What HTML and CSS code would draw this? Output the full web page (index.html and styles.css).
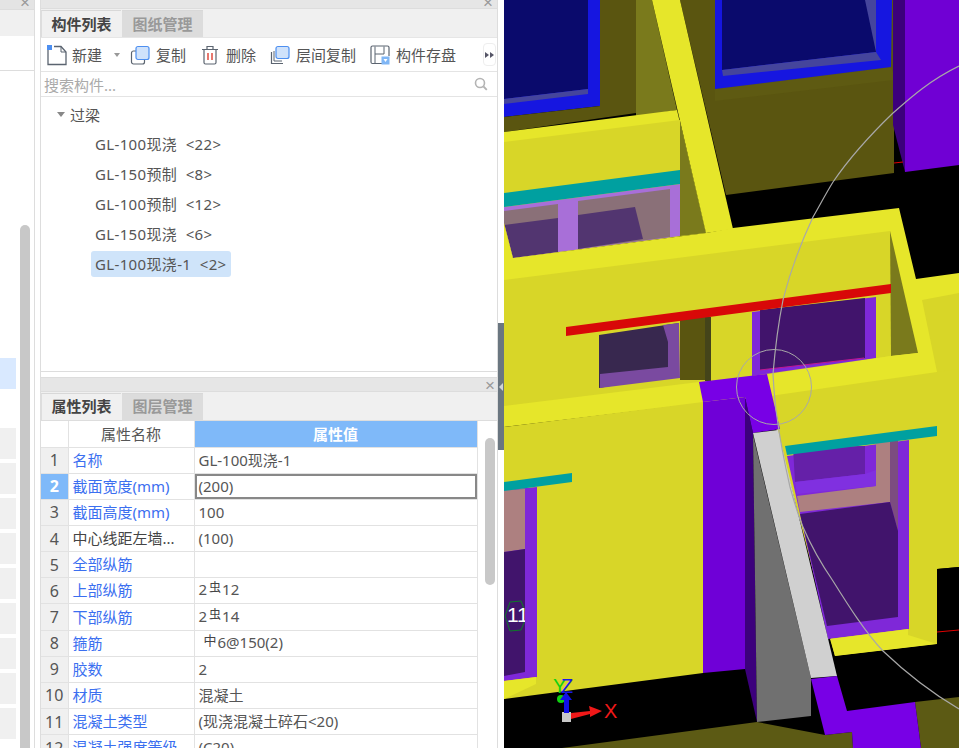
FILE: index.html
```html
<!DOCTYPE html>
<html lang="zh-CN">
<head>
<meta charset="utf-8">
<title>构件列表</title>
<link rel="stylesheet" href="styles.css">
</head>
<body>
<div class="app">
  <aside class="side">
    <div class="side-head"><span class="close">×</span></div>
    <div class="side-tabs"></div>
    <div class="side-tool"></div>
    <div class="side-body">
      <div class="side-list">
        <div class="blk blk-on"></div>
        <div class="blk blk-first"></div><div class="blk"></div><div class="blk"></div><div class="blk"></div>
        <div class="blk"></div><div class="blk"></div><div class="blk"></div><div class="blk"></div><div class="blk"></div>
      </div>
      <div class="side-scroll"></div>
    </div>
  </aside>

  <main class="panels">
    <section class="panel-top">
      <div class="head head-top"><span class="close">×</span></div>
      <div class="tabs">
        <div class="tab tab-on">构件列表</div>
        <div class="tab">图纸管理</div>
      </div>
      <div class="toolbar">
        <div class="tool tool-new">
          <svg class="ico" width="22" height="22" viewBox="0 0 22 22"><path d="M2 6V20.500H20V8L15 2.500H8" fill="none" stroke="#5b6470" stroke-width="1.300"/><path d="M15 2.500V8H20" fill="none" stroke="#5b6470" stroke-width="1"/><rect x="1" y="1" width="5" height="5" fill="#4d8ff0"/></svg>
          <span>新建</span><i class="caret"></i>
        </div>
        <div class="tool tool-copy">
          <svg class="ico" width="20" height="20" viewBox="0 0 20 20"><rect x="1.500" y="6" width="13" height="13" rx="2" fill="#fff" stroke="#5b6470" stroke-width="1.200"/><rect x="6" y="1.500" width="13" height="13" rx="2" fill="#cfe2fb" stroke="#4d8ff0" stroke-width="1.200"/></svg>
          <span>复制</span>
        </div>
        <div class="tool tool-del">
          <svg class="ico" width="18" height="20" viewBox="0 0 18 20"><path d="M3 5V17.500Q3 19 4.500 19H13.500Q15 19 15 17.500V5M1 4.500H17M6 4.500V1.500H12V4.500" fill="none" stroke="#5b6470" stroke-width="1.200"/><path d="M7 8V15M11 8V15" stroke="#e2574c" stroke-width="1.600"/></svg>
          <span>删除</span>
        </div>
        <div class="tool tool-floor">
          <svg class="ico" width="20" height="20" viewBox="0 0 20 20"><path d="M1.500 7V18.500H13" fill="none" stroke="#5b6470" stroke-width="1.200"/><path d="M4 6V16H12" fill="none" stroke="#5b6470" stroke-width="1"/><rect x="6" y="1.500" width="13" height="12" rx="2" fill="#cfe2fb" stroke="#4d8ff0" stroke-width="1.200"/></svg>
          <span>层间复制</span>
        </div>
        <div class="tool tool-save">
          <svg class="ico" width="20" height="20" viewBox="0 0 20 20"><path d="M12 18.500H2.500Q1 18.500 1 17V2.500Q1 1 2.500 1H17.500Q19 1 19 2.500V11" fill="none" stroke="#5b6470" stroke-width="1.200"/><path d="M5 1.500V18M5 9H14V1.500" fill="none" stroke="#5b6470" stroke-width="1"/><rect x="11.500" y="11.500" width="8" height="8" fill="#7fb6f5"/><path d="M13.500 14H17.500L15.500 17Z" fill="#fff"/></svg>
          <span>构件存盘</span>
        </div>
        <button class="more" type="button" aria-label="更多"><i></i><i></i></button>
      </div>
      <div class="search">
        <span>搜索构件...</span>
        <svg width="14" height="14" viewBox="0 0 14 14"><circle cx="6" cy="6" r="4.500" fill="none" stroke="#b4b4b4" stroke-width="1.600"/><path d="M9.500 9.500L12.800 12.800" stroke="#b4b4b4" stroke-width="1.800"/></svg>
      </div>
      <div class="tree">
        <div class="tree-root"><i class="tree-arrow"></i>过梁</div>
        <div class="tree-item"><span>GL-100现浇  &lt;22&gt;</span></div>
        <div class="tree-item"><span>GL-150预制  &lt;8&gt;</span></div>
        <div class="tree-item"><span>GL-100预制  &lt;12&gt;</span></div>
        <div class="tree-item"><span>GL-150现浇  &lt;6&gt;</span></div>
        <div class="tree-item tree-sel"><span>GL-100现浇-1  &lt;2&gt;</span></div>
      </div>
    </section>

    <section class="panel-bot">
      <div class="head head-bot"><span class="close close-bot">×</span></div>
      <div class="tabs tabs-bot">
        <div class="tab tab-on">属性列表</div>
        <div class="tab">图层管理</div>
      </div>
      <div class="grid-wrap">
        <table class="grid">
          <colgroup><col class="c-n"><col class="c-k"><col class="c-v"></colgroup>
          <thead><tr><th class="idx"></th><th class="th-name">属性名称</th><th class="th-val">属性值</th></tr></thead>
          <tbody>
            <tr><td class="idx">1</td><td class="key">名称</td><td>GL-100现浇-1</td></tr>
            <tr><td class="idx idx-on">2</td><td class="key">截面宽度(mm)</td><td class="cell-on">(200)</td></tr>
            <tr><td class="idx">3</td><td class="key">截面高度(mm)</td><td>100</td></tr>
            <tr><td class="idx">4</td><td class="dark">中心线距左墙...</td><td>(100)</td></tr>
            <tr><td class="idx">5</td><td class="key">全部纵筋</td><td></td></tr>
            <tr><td class="idx">6</td><td class="key">上部纵筋</td><td>2<span class="bar">虫</span>12</td></tr>
            <tr><td class="idx">7</td><td class="key">下部纵筋</td><td>2<span class="bar">虫</span>14</td></tr>
            <tr><td class="idx">8</td><td class="key">箍筋</td><td><span class="bar bar-first">中</span>6@150(2)</td></tr>
            <tr><td class="idx">9</td><td class="key">胶数</td><td>2</td></tr>
            <tr><td class="idx">10</td><td class="key">材质</td><td>混凝土</td></tr>
            <tr><td class="idx">11</td><td class="key">混凝土类型</td><td>(现浇混凝土碎石&lt;20)</td></tr>
            <tr><td class="idx">12</td><td class="key">混凝土强度等级</td><td>(C20)</td></tr>
          </tbody>
        </table>
        <div class="grid-scroll"><div class="thumb"></div></div>
      </div>
    </section>
  </main>

  <div class="splitter"><div class="split-handle"><i></i></div></div>

  <div class="scene">
    <svg class="scene-svg" width="455" height="748" viewBox="504 0 455 748" xmlns="http://www.w3.org/2000/svg">
      <rect x="504" y="0" width="455" height="748" fill="#000"/>
      <!-- far walls -->
      <polygon points="680,0 894,0 894,173 726,195" fill="#5a5510"/>
      <polygon points="715,89 891,67 894,76 894,80 715,101" fill="#5e5a12"/>
      <polygon points="715,0 892,0 891,67 715,89" fill="#1616e0"/>
      <polygon points="722,0 876,0 876,52 722,70" fill="#0a0a6c"/>
      <polygon points="722,70 876,52 881,60 723,76" fill="#45459c"/>
      <polygon points="865,0 876,0 876,52" fill="#45459c"/>
      <polygon points="893,0 905,0 905,172 893,125" fill="#3c007c"/>
      <polygon points="905,0 959,0 959,165 905,172" fill="#7000d4"/>
      <polygon points="504,0 600,0 600,106 504,117" fill="#1616e0"/>
      <polygon points="504,0 588,0 588,89 504,99" fill="#0a0a6c"/>
      <polygon points="504,99 588,89 588,94 504,104" fill="#45459c"/>
      <polygon points="600,0 636,0 636,113 504,132 504,117 600,106" fill="#5a5510"/>
      <polygon points="636,0 652,0 677,110 636,117" fill="#7a7a1c"/>
      <!-- upper-left wall -->
      <polygon points="504,132 677,110 706,233 513,258 504,223" fill="#e6e62a"/>
      <polygon points="504,142 680,120 680,236 513,258 504,223" fill="#d8d628"/>
      <polygon points="504,207 680,184 680,236 513,258 504,223" fill="#a86fd8"/>
      <polygon points="504,218 558,218 558,252 513,258 504,223" fill="#523570"/>
      <polygon points="504,211 558,204 558,218 504,225" fill="#8a7078"/>
      <polygon points="578,201 670,189 670,237 578,249" fill="#8a7078"/>
      <polygon points="578,215 635,207 643,239 578,249" fill="#523570"/>
      <polygon points="504,193 680,170 680,184 504,207" fill="#00a0a0"/>
      <polygon points="680,122 706,233 680,236" fill="#7a7a1c"/>
      <polygon points="652,0 680,0 733,229 706,233" fill="#e6e62a"/>
      <!-- middle wall -->
      <polygon points="504,223 513,258 706,233 733,228 899,208 916,279 959,273 959,380 504,420" fill="#e6e62a"/>
      <polygon points="504,280 890,231 891,356 770,374 504,410" fill="#d8d628"/>
      <polygon points="922,300 959,293 959,400 900,400 937,372" fill="#d8d628"/>
      <polygon points="890,231 918,353 891,356" fill="#7a7a1c"/>
      <polygon points="599,335 679,323 679,374 599,388" fill="#38284f"/>
      <polygon points="663,325 679,323 680,378 600,388 600,374 668,367 668,342" fill="#7a4aa0"/>
      <polygon points="680,317 705,317 705,380 680,380" fill="#5a5510"/>
      <rect x="705" y="317" width="6" height="64" fill="#44441a"/>
      <polygon points="752,312 876,297 876,358 752,376" fill="#7f28d8"/>
      <polygon points="760,310 865,298 865,358 760,370" fill="#41146c"/>
      <line x1="760" y1="370" x2="864" y2="358" stroke="#c01890" stroke-width="1"/>
      <polygon points="566,327 891,284 891,293 566,336" fill="#d80808"/>
      <polygon points="891,356 918,353 937,372 770,396 767,376" fill="#e6e62a"/>
      <line x1="894" y1="163" x2="903" y2="162" stroke="#e00000" stroke-width="1"/>
      <!-- lower wall -->
      <polygon points="504,406 699,382 703,403 504,427" fill="#e6e62a"/>
      <polygon points="504,427 703,402 703,673 504,699" fill="#d8d628"/>
      <polygon points="770,396 937,372 959,369 959,567 937,569 937,644 835,656 777,432" fill="#d8d628"/>
      <polygon points="937,569 959,567 959,700 830,700 835,656 937,644" fill="#000"/>
      <line x1="937" y1="632" x2="959" y2="630" stroke="#e00000" stroke-width="1"/>
      <!-- lower-left window -->
      <polygon points="504,490 537,487 537,677 504,681" fill="#7f28d8"/>
      <polygon points="504,490 525,489 525,549 504,552" fill="#ad8080"/>
      <polygon points="504,552 525,549 525,672 504,676" fill="#41146c"/>
      <polygon points="505,616 510,602 521,601 527,616 521,630 510,631" fill="none" stroke="#0d7a28" stroke-width="1"/>
      <text class="lbl-11" x="507" y="622" clip-path="url(#clip11)">11</text>
      <rect x="525" y="489" width="12" height="188" fill="#7f28d8"/>
      <polygon points="504,681 536,677 536,684 504,699" fill="#e6e62a"/>
      <polygon points="504,482 572,473 572,482 504,491" fill="#00a0a0"/>
      <!-- lower-right window -->
      <polygon points="787,456 909,440 909,629 828,639" fill="#7f28d8"/>
      <polygon points="793,447 865,446 865,474 795,482" fill="#6520a8"/>
      <polygon points="797,496 876,486 876,442 890,441 890,502 800,512" fill="#ad8080"/>
      <polygon points="890,441 898,440 898,531 890,502" fill="#7c4c80"/>
      <polygon points="795,482 865,474 876,470 876,486 797,494" fill="#8030e0"/>
      <polygon points="800,514 890,502 898,531 898,617 827,626" fill="#41146c"/>
      <polygon points="830,639 908,629 908,635 937,644 835,656" fill="#e6e62a"/>
      <polygon points="785,446 937,426 937,436 787,455" fill="#00a0a0"/>
      <!-- column and beam -->
      <polygon points="703,402 745,397 745,669 703,673" fill="#6f00d7"/>
      <polygon points="745,397 753,433 757,722 745,669" fill="#3c007c"/>
      <polygon points="699,382 767,374 780,429 753,433 745,397 703,402" fill="#7800e6"/>
      <polygon points="753,435 811,678 811,716 757,722" fill="#707070"/>
      <polygon points="753,433 778,430 837,676 811,678" fill="#d0d0d0"/>
      <!-- floor slab -->
      <polygon points="562,748 757,722 825,735 852,732 853,748" fill="#5c5a14"/>
      <polygon points="915,702 959,697 959,748 921,748" fill="#5c5a14"/>
      <polygon points="811,679 837,676 847,711 915,702 921,748 853,748 852,732 825,735" fill="#7800e6"/>
      <!-- sweep circles -->
      <path d="M959 66C930 80 910 98 893 113C865 140 848 160 833 182C825 195 820 205 813 217C800 245 790 272 783 300C778 325 775 350 773 374C774 392 775 405 777 417C780 440 785 465 790 487C795 505 798 515 803 527C812 548 822 565 833 581C848 605 865 632 883 651C905 672 930 692 959 709" fill="none" stroke="#a8a8a8" stroke-width="1.200"/>
      <circle cx="774" cy="387" r="37.500" fill="none" stroke="#a8a8a8" stroke-width="1"/>
      <!-- axis gizmo -->
      <rect x="562" y="712" width="9" height="10" fill="#c8c8c8"/>
      <path d="M571 713L590 711L589 706L602 711L590 717L590 714L571 719Z" fill="#f01818"/>
      <circle cx="561" cy="699" r="4" fill="#10d010"/>
      <path d="M566 692L572 700H569V713H564V700H560Z" fill="#1010e8"/>
      <text class="lbl-y" x="553" y="693">Y</text>
      <text class="lbl-z" x="561" y="693">Z</text>
      <text class="lbl-x" x="604" y="718">X</text>
      <defs><clipPath id="clip11"><rect x="504" y="600" width="21" height="32"/></clipPath></defs>
    </svg>
  </div>
</div>
</body>
</html>
```

FILE: styles.css
```css
* { box-sizing: border-box; }
html, body { margin: 0; padding: 0; background: #fff; }
body {
  font-family: "Noto Sans", "Noto Sans CJK SC", sans-serif;
  font-size: 15px;
  color: #444;
}
.app { display: flex; width: 959px; height: 748px; overflow: hidden; background: #fff; }

/* left sliver */
.side { width: 35px; flex: none; border-right: 1px solid #ddd; margin-right: 5px; display: flex; flex-direction: column; }
.side-head { height: 9px; background: #e4e4e4; position: relative; overflow: hidden; }
.side-tabs { height: 27px; background: #f0f0f0; border-top: 1px solid #ddd; }
.side-tool { height: 35px; background: #fff; border-top: 1px solid #fff; border-bottom: 1px solid #ddd; }
.side-body { flex: 1; display: flex; min-height: 0; }
.side-list { width: 16px; padding-top: 287px; }
.blk { height: 31px; margin-bottom: 4px; background: #f0f0f0; }
.blk-on { background: #d9e9ff; }
.blk-first { margin-top: 39px; }
.side-scroll { width: 10px; margin-left: 4px; margin-top: 154px; background: #c8c8c8; border-radius: 5px 5px 0 0; }

.close { position: absolute; right: 4px; top: -6px; font-size: 17px; line-height: 17px; color: #999; font-family: "Liberation Sans", sans-serif; }
.side-head .close { right: 4px; }

/* panels */
.panels { width: 458px; flex: none; display: flex; flex-direction: column; border-left: 1px solid #ddd; border-right: 1px solid #ddd; }
.panel-top { height: 372px; flex: none; display: flex; flex-direction: column; border-bottom: 1px solid #ddd; }
.panel-bot { margin-top: 5px; flex: 1; min-height: 0; display: flex; flex-direction: column; }
.head { background: #e6e6e6; position: relative; flex: none; }
.head-top { height: 9px; overflow: hidden; border-bottom: 1px solid #ddd; }
.head-bot { height: 15px; border-top: 1px solid #ddd; border-bottom: 1px solid #ddd; }
.close-bot { top: -1px; right: 2px; }
.tabs { height: 29px; flex: none; background: #f0f0f0; display: flex; border-bottom: 1px solid #e6e6e6; padding-top: 1px; }
.tabs-bot { height: 28px; border-bottom: 0; }
.tab { width: 81px; display: flex; align-items: center; justify-content: center; padding-bottom: 2px; background: #dcdcdc; color: #999; font-size: 15px; font-weight: 700; border-top: 1px solid #d8d8d8; }
.tabs-bot .tab { padding-bottom: 3px; }
.tab-on { width: 80px; margin-right: 1px; background: #f0f0f0; color: #444; border-left: 1px solid #ddd; }

.toolbar { height: 34px; flex: none; display: flex; align-items: center; background: #fff; border-bottom: 1px solid #e4e4e4; position: relative; color: #555; padding-left: 5px; }
.tool { display: flex; align-items: center; gap: 4px; }
.tool-new { width: 84px; }
.tool-copy { gap: 6px; }
.tool-del { margin-left: 15px; gap: 7px; }
.tool-floor { margin-left: 14px; gap: 6px; }
.tool-save { margin-left: 14px; gap: 6px; }
.caret { width: 0; height: 0; margin-left: 8px; border: 3px solid transparent; border-top: 4px solid #999; border-bottom: 0; }
.ico { flex: none; }
.more { position: absolute; right: 1px; top: 5px; width: 13px; height: 23px; padding: 0; border: 1px solid #eee; border-radius: 4px; background: #fff; display: flex; align-items: center; justify-content: center; }
.more i { width: 0; height: 0; border-left: 4px solid #556; border-top: 3px solid transparent; border-bottom: 3px solid transparent; margin-right: 1px; }

.search { height: 25px; flex: none; display: flex; align-items: center; justify-content: space-between; padding: 0 9px 0 3px; border-bottom: 1px solid #e4e4e4; color: #aaa; }
.tree { flex: 1; background: #fff; padding-top: 2px; }
.tree-root { height: 30px; display: flex; align-items: center; padding-left: 16px; color: #555; }
.tree-arrow { width: 0; height: 0; margin-right: 5px; border: 4px solid transparent; border-top: 5px solid #888; border-bottom: 0; }
.tree-item { height: 30px; display: flex; align-items: center; padding-left: 50px; color: #555; }
.tree-item span { padding: 0 4px 0 4px; height: 26px; line-height: 26px; border-radius: 3px; white-space: pre; letter-spacing: 0.35px; }
.tree-sel span { background: #cfe4fa; }

/* property grid */
.grid-wrap { flex: 1; min-height: 0; display: flex; overflow: hidden; background: #fff; border-top: 1px solid #ddd; }
.grid { width: 436px; flex: none; table-layout: fixed; border-collapse: collapse; font-size: 15px; align-self: flex-start; }
.c-n { width: 27px; }
.c-k { width: 126px; }
.c-v { width: 283px; }
.grid th, .grid td { height: 26.170px; padding: 0 0 1px 4px; border: 1px solid #e2e2e2; border-width: 0 1px 1px 0; white-space: nowrap; overflow: hidden; font-weight: 400; text-align: left; color: #555; line-height: 20px; }
.grid th { height: 26px; }
.grid .idx { padding: 0; text-align: center; background: #f0f0f0; color: #555; font-size: 16px; }
.grid thead .idx { background: #fff; }
.grid .th-name { text-align: center; padding: 0; }
.grid .th-val { text-align: center; padding: 0; background: #7fb9f9; color: #fff; font-weight: 700; }
.grid .key { color: #3b6ff0; }
.grid .dark { color: #444; }
.grid .idx-on { background: #7fb9f9; color: #fff; font-weight: 700; }
.grid .cell-on { box-shadow: inset 0 0 0 2px #888; }
.bar { font-size: 12px; position: relative; top: -3px; margin: 0 1px 0 2px; color: #444; }
.bar-first { margin-left: 5px; font-size: 13px; }
.grid-scroll { flex: 1; padding: 17px 3px 0 7px; }
.thumb { width: 10px; height: 147px; background: #c8c8c8; border-radius: 5px; }

/* splitter */
.splitter { width: 6px; flex: none; background: #fff; padding-top: 323px; }
.split-handle { height: 127px; background: #6a7680; display: flex; align-items: center; justify-content: center; }
.split-handle i { width: 0; height: 0; border-right: 4px solid #cfd4d8; border-top: 4px solid transparent; border-bottom: 4px solid transparent; }

/* 3D scene */
.scene { width: 455px; flex: none; }
.scene-svg { display: block; }
.scene-svg text { font-family: "Liberation Sans", sans-serif; }
.lbl-11 { fill: #fff; font-size: 21px; }
.lbl-y { fill: #10d010; font-size: 20px; }
.lbl-z { fill: #1818e8; font-size: 20px; }
.lbl-x { fill: #f01818; font-size: 20px; }
```
